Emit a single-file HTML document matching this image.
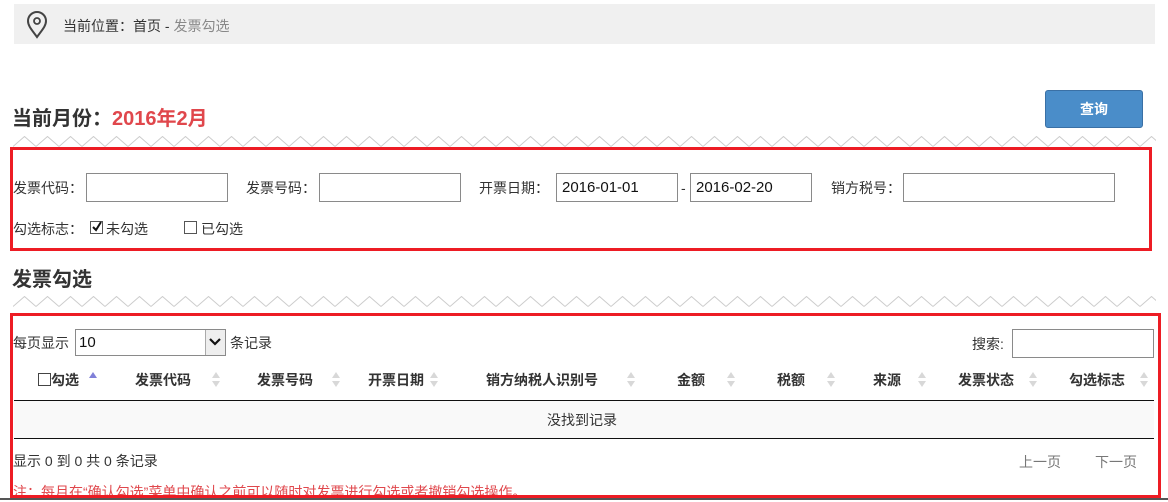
<!DOCTYPE html>
<html><head><meta charset="utf-8"><style>
*{margin:0;padding:0;box-sizing:border-box}
body{width:1168px;height:500px;overflow:hidden;background:#fff;position:relative;font-family:"Liberation Sans","Noto Sans CJK SC",sans-serif;font-size:14px;color:#333}
.a{position:absolute;white-space:nowrap;line-height:20px}
.in{position:absolute;border:1px solid #8a8a8a;background:#fff;height:29px;font-size:15px;line-height:27px;padding-left:5px;color:#111}
.h{position:absolute;top:370px;line-height:20px;font-weight:bold;white-space:nowrap;color:#333}
.rb{position:absolute;border:3px solid #ed1c24}
</style></head><body>
<div style="position:absolute;left:14px;top:4px;width:1141px;height:40px;background:#f0f0f0"></div>
<svg style="position:absolute;left:26px;top:11px" width="22" height="28" viewBox="0 0 22 28"><path d="M11 26 C6 19 2 15 2 10 A9 9 0 0 1 20 10 C20 15 16 19 11 26 Z" fill="none" stroke="#444" stroke-width="2"/><circle cx="11" cy="10" r="3" fill="none" stroke="#444" stroke-width="1.8"/></svg>
<div class="a" style="left:63px;top:16px">当前位置：首页 - <span style="color:#888">发票勾选</span></div>

<div class="a" style="left:12px;top:107px;font-size:20px;line-height:24px;font-weight:bold;color:#333">当前月份：<span style="color:#e0474c">2016年2月</span></div>
<div style="position:absolute;left:1045px;top:90px;width:98px;height:38px;background:#4a8dc9;border:1px solid #3a70a5;border-radius:3px;color:#fff;font-weight:bold;font-size:14px;text-align:center;line-height:36px">查询</div>

<svg style="position:absolute;left:13px;top:136px" width="1143" height="11"><defs><pattern id="z" width="23" height="11" patternUnits="userSpaceOnUse"><path d="M0 10.5 L11.5 0.5 L23 10.5" fill="none" stroke="#ccc" stroke-width="1"/></pattern></defs><rect width="1143" height="11" fill="url(#z)"/></svg>
<svg style="position:absolute;left:13px;top:296px" width="1143" height="11"><rect width="1143" height="11" fill="url(#z)"/></svg>

<div class="rb" style="left:10px;top:147px;width:1142px;height:104px"></div>
<div class="a" style="left:13px;top:178px">发票代码：</div>
<div class="in" style="left:86px;top:173px;width:142px"></div>
<div class="a" style="left:246px;top:178px">发票号码：</div>
<div class="in" style="left:319px;top:173px;width:142px"></div>
<div class="a" style="left:479px;top:178px">开票日期：</div>
<div class="in" style="left:556px;top:173px;width:122px">2016-01-01</div>
<div class="a" style="left:681px;top:178px">-</div>
<div class="in" style="left:690px;top:173px;width:122px">2016-02-20</div>
<div class="a" style="left:831px;top:178px">销方税号：</div>
<div class="in" style="left:903px;top:173px;width:212px"></div>
<div class="a" style="left:13px;top:219px">勾选标志：</div>
<div style="position:absolute;left:90px;top:221px;width:13px;height:13px;border:1px solid #555;background:#fff"></div>
<svg style="position:absolute;left:90px;top:220px" width="14" height="14"><path d="M3 7 L6 10 L11 2" fill="none" stroke="#111" stroke-width="2"/></svg>
<div class="a" style="left:106px;top:219px">未勾选</div>
<div style="position:absolute;left:184px;top:221px;width:13px;height:13px;border:1px solid #555;background:#fff"></div>
<div class="a" style="left:201px;top:219px">已勾选</div>

<div class="a" style="left:12px;top:268px;font-size:20px;line-height:24px;font-weight:bold">发票勾选</div>

<div class="a" style="left:13px;top:333px">每页显示</div>
<div style="position:absolute;left:75px;top:329px;width:151px;height:27px;border:1px solid #8a8a8a;font-size:15px;line-height:25px;padding-left:3px;color:#111">10</div>
<div style="position:absolute;left:205px;top:330px;width:20px;height:25px;background:#eee;border-left:1px solid #aaa"></div>
<svg style="position:absolute;left:208px;top:337px" width="14" height="10"><path d="M2 2 L7 7 L12 2" fill="none" stroke="#111" stroke-width="2.2"/></svg>
<div class="a" style="left:230px;top:333px">条记录</div>
<div class="a" style="left:972px;top:334px">搜索:</div>
<div class="in" style="left:1012px;top:329px;width:142px"></div>

<div style="position:absolute;left:38px;top:373px;width:13px;height:13px;border:1px solid #444"></div>
<div class="h" style="left:51px">勾选</div>
<svg style="position:absolute;left:88px;top:371px" width="10" height="8"><path d="M1 7 L5 1 L9 7Z" fill="#8080d8"/></svg>
<div class="h" style="left:135px">发票代码</div>
<div class="h" style="left:257px">发票号码</div>
<div class="h" style="left:368px">开票日期</div>
<div class="h" style="left:486px">销方纳税人识别号</div>
<div class="h" style="left:677px">金额</div>
<div class="h" style="left:777px">税额</div>
<div class="h" style="left:873px">来源</div>
<div class="h" style="left:958px">发票状态</div>
<div class="h" style="left:1069px">勾选标志</div>
<svg style="position:absolute;left:0;top:372px" width="1168" height="16">
<g fill="#d8d8d8">
<path d="M212 6 L216 0 L220 6Z M212 9 L216 15 L220 9Z"/>
<path d="M332 6 L336 0 L340 6Z M332 9 L336 15 L340 9Z"/>
<path d="M430 6 L434 0 L438 6Z M430 9 L434 15 L438 9Z"/>
<path d="M627 6 L631 0 L635 6Z M627 9 L631 15 L635 9Z"/>
<path d="M727 6 L731 0 L735 6Z M727 9 L731 15 L735 9Z"/>
<path d="M827 6 L831 0 L835 6Z M827 9 L831 15 L835 9Z"/>
<path d="M918 6 L922 0 L926 6Z M918 9 L922 15 L926 9Z"/>
<path d="M1029 6 L1033 0 L1037 6Z M1029 9 L1033 15 L1037 9Z"/>
<path d="M1140 6 L1144 0 L1148 6Z M1140 9 L1144 15 L1148 9Z"/>
</g></svg>
<div style="position:absolute;left:14px;top:400px;width:1140px;height:39px;background:#f9f9f9;border-top:1px solid #111;border-bottom:1px solid #111"></div>
<div class="a" style="left:547px;top:410px">没找到记录</div>
<div class="a" style="left:13px;top:451px">显示 0 到 0 共 0 条记录</div>
<div class="a" style="left:1019px;top:452px;color:#777">上一页</div>
<div class="a" style="left:1095px;top:452px;color:#777">下一页</div>
<div class="a" style="left:13px;top:482px;color:#e0474c">注：每月在“确认勾选”菜单中确认之前可以随时对发票进行勾选或者撤销勾选操作。</div>
<div class="rb" style="left:10px;top:313px;width:1151px;height:185px"></div>
<div style="position:absolute;left:0;top:498px;width:1168px;height:2px;background:#555"></div>
</body></html>
